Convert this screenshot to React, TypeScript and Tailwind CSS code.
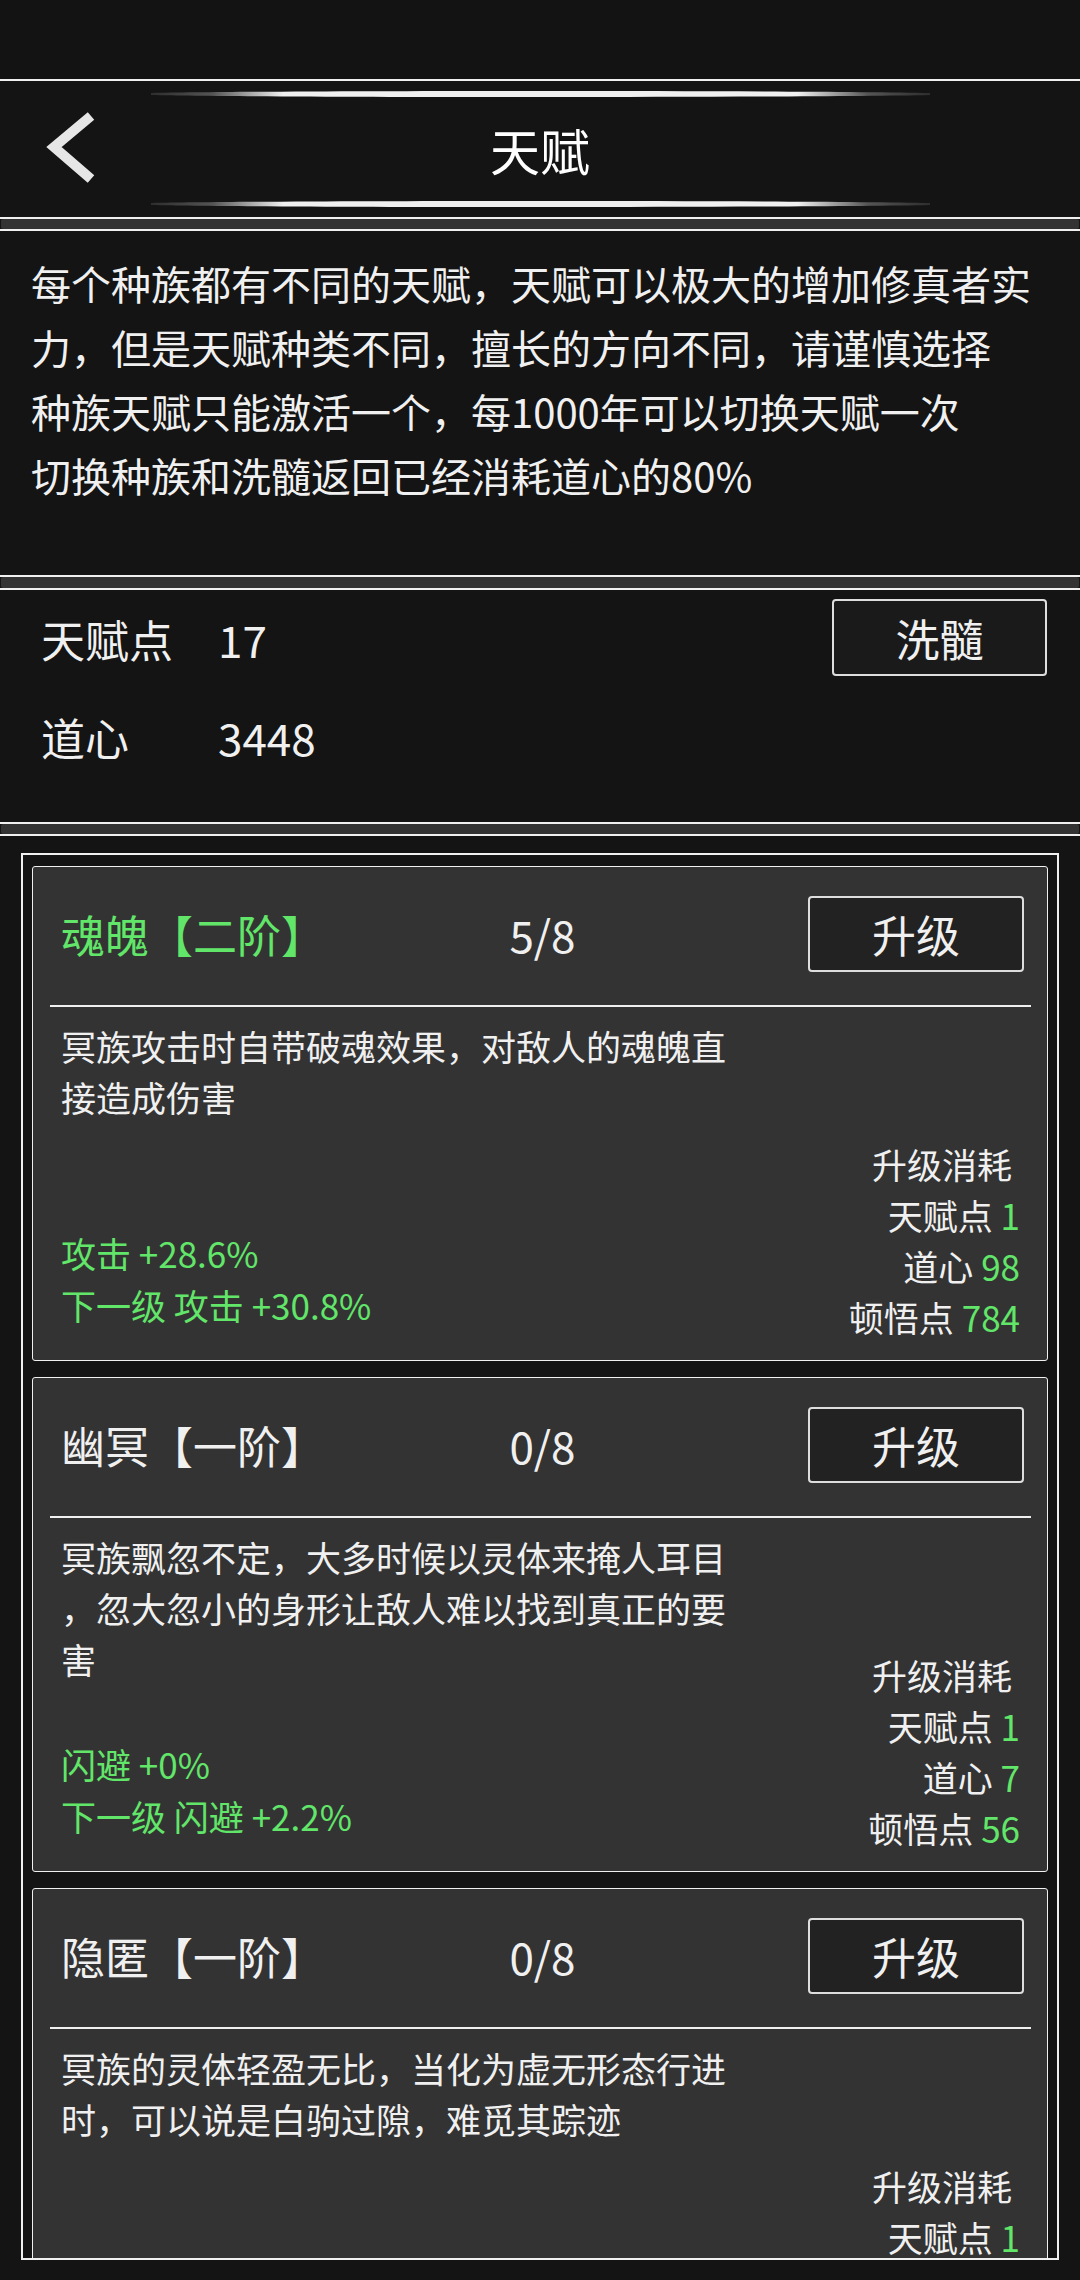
import React from "react";

const GREEN = "#62e66a";

function GlowLine() {
  return (
    <svg width="779" height="8" viewBox="0 0 779 8" className="block">
      <defs>
        <linearGradient id="glow" x1="0" y1="0" x2="1" y2="0">
          <stop offset="0" stopColor="#2e2e2e" />
          <stop offset="0.08" stopColor="#555" />
          <stop offset="0.17" stopColor="#f0f0f0" />
          <stop offset="0.83" stopColor="#f0f0f0" />
          <stop offset="0.92" stopColor="#555" />
          <stop offset="1" stopColor="#2e2e2e" />
        </linearGradient>
      </defs>
      <path d="M0 3 C 130 0.3, 649 0.3, 779 3 L779 5 C 649 7.7, 130 7.7, 0 5 Z" fill="url(#glow)" />
    </svg>
  );
}

type Card = {
  title: string;
  green?: boolean;
  count: string;
  desc: string[];
  stats: string[];
  costs: [string, string][];
};

const cards: Card[] = [
  {
    title: "魂魄【二阶】",
    green: true,
    count: "5/8",
    desc: ["冥族攻击时自带破魂效果，对敌人的魂魄直", "接造成伤害"],
    stats: ["攻击 +28.6%", "下一级 攻击 +30.8%"],
    costs: [
      ["天赋点", "1"],
      ["道心", "98"],
      ["顿悟点", "784"],
    ],
  },
  {
    title: "幽冥【一阶】",
    count: "0/8",
    desc: ["冥族飘忽不定，大多时候以灵体来掩人耳目", "，忽大忽小的身形让敌人难以找到真正的要", "害"],
    stats: ["闪避 +0%", "下一级 闪避 +2.2%"],
    costs: [
      ["天赋点", "1"],
      ["道心", "7"],
      ["顿悟点", "56"],
    ],
  },
  {
    title: "隐匿【一阶】",
    count: "0/8",
    desc: ["冥族的灵体轻盈无比，当化为虚无形态行进", "时，可以说是白驹过隙，难觅其踪迹"],
    stats: ["闪避 +0%", "下一级 闪避 +2.1%"],
    costs: [
      ["天赋点", "1"],
      ["道心", "7"],
      ["顿悟点", "56"],
    ],
  },
];

function TalentCard({ c }: { c: Card }) {
  return (
    <div className="h-[495px] shrink-0 rounded-[3px] border border-[#f0f0f0] bg-[#333333] flex flex-col">
      <div className="pt-[29px] pl-[28px] pr-[23px] grid grid-cols-[1fr_auto_1fr] items-center h-[105px]">
        <div
          className="text-[44px] leading-none whitespace-nowrap"
          style={{ color: c.green ? GREEN : "#f0f0f0" }}
        >
          {c.title}
        </div>
        <div className="text-[44px] leading-none text-[#f0f0f0]">{c.count}</div>
        <div className="justify-self-end w-[216px] h-[76px] rounded-[4px] border-2 border-[#dedede] bg-[#222222] flex items-center justify-center text-[44px] text-[#f0f0f0]">
          升级
        </div>
      </div>
      <div className="mt-[33px] ml-[17px] mr-[16px] h-[2px] bg-[#f0f0f0]" />
      <div className="flex-1 grid grid-cols-1 grid-rows-1">
        <div className="col-start-1 row-start-1 self-start mt-[13px] pl-[28px] text-[35px] leading-[51px] text-[#f0f0f0]">
          {c.desc.map((l, i) => (
            <div key={i} className="whitespace-nowrap">
              {l}
            </div>
          ))}
        </div>
        <div className="col-start-1 row-start-1 self-end flex justify-between items-end pl-[28px] pr-[27px] pb-[18px]">
          <div className="mb-[11px] text-[35px] leading-[52px]" style={{ color: GREEN }}>
            {c.stats.map((s, i) => (
              <div key={i} className="whitespace-nowrap">
                {s}
              </div>
            ))}
          </div>
          <div className="text-right text-[35px] leading-[51px] text-[#f0f0f0]">
            <div className="pr-[8px]">升级消耗</div>
            {c.costs.map(([k, v], i) => (
              <div key={i} className="whitespace-nowrap">
                {k} <span style={{ color: GREEN }}>{v}</span>
              </div>
            ))}
          </div>
        </div>
      </div>
    </div>
  );
}

export default function App() {
  return (
    <div className="w-[1080px] h-[2280px] overflow-hidden bg-[#141414] flex flex-col font-['Noto_Sans_CJK_SC','Noto_Sans',sans-serif] font-normal text-[#f0f0f0]">
      {/* status area */}
      <div className="h-[79px] shrink-0 bg-[#131313]" />

      {/* header */}
      <div className="shrink-0 border-y-2 border-[#f0f0f0] bg-[#141414] h-[140px] flex flex-col items-center">
        <div className="pt-[9px]">
          <GlowLine />
        </div>
        <div className="w-full h-[102px] grid grid-cols-[1fr_auto_1fr] items-center">
          <div className="pl-[40px]">
            <svg width="60" height="80" viewBox="0 0 60 80" className="block">
              <polyline
                points="51,7 14,38 51,70"
                fill="none"
                stroke="#e6e6e6"
                strokeWidth="10"
                strokeLinecap="butt"
                strokeLinejoin="miter"
              />
            </svg>
          </div>
          <div className="text-[50px] leading-none text-white">天赋</div>
          <div />
        </div>
        <GlowLine />
      </div>

      <div className="h-[10px] shrink-0 bg-[#333333] mx-[1px] rounded-[2px]" />

      {/* description */}
      <div className="shrink-0 h-[348px] border-y-2 border-[#f0f0f0] bg-[#141414] pl-[31px] pt-[20px] text-[40px] leading-[64px]">
        <div className="whitespace-nowrap">每个种族都有不同的天赋，天赋可以极大的增加修真者实</div>
        <div className="whitespace-nowrap">力，但是天赋种类不同，擅长的方向不同，请谨慎选择</div>
        <div className="whitespace-nowrap">种族天赋只能激活一个，每1000年可以切换天赋一次</div>
        <div className="whitespace-nowrap">切换种族和洗髓返回已经消耗道心的80%</div>
      </div>

      <div className="h-[11px] shrink-0 bg-[#333333] mx-[1px] rounded-[2px]" />

      {/* stats */}
      <div className="shrink-0 h-[236px] border-y-2 border-[#f0f0f0] bg-[#141414] flex justify-between">
        <div className="pl-[41px] text-[44px]">
          <div className="h-[98px] flex items-center">
            <span className="w-[177px]">天赋点</span>
            <span>17</span>
          </div>
          <div className="h-[98px] flex items-center">
            <span className="w-[177px]">道心</span>
            <span>3448</span>
          </div>
        </div>
        <div className="mt-[9px] mr-[33px] w-[215px] h-[77px] rounded-[4px] border-2 border-[#dedede] bg-[#1a1a1a] flex items-center justify-center text-[44px]">
          洗髓
        </div>
      </div>

      <div className="h-[10px] shrink-0 bg-[#333333] mx-[1px] rounded-[2px]" />

      {/* list */}
      <div className="flex-1 border-t-2 border-[#f0f0f0] bg-[#141414] pt-[17px]">
        <div className="mx-[21px] h-[1407px] border-2 border-[#f0f0f0] overflow-hidden px-[9px] pt-[11px] flex flex-col gap-[16px]">
          {cards.map((c, i) => (
            <TalentCard key={i} c={c} />
          ))}
        </div>
      </div>
    </div>
  );
}
